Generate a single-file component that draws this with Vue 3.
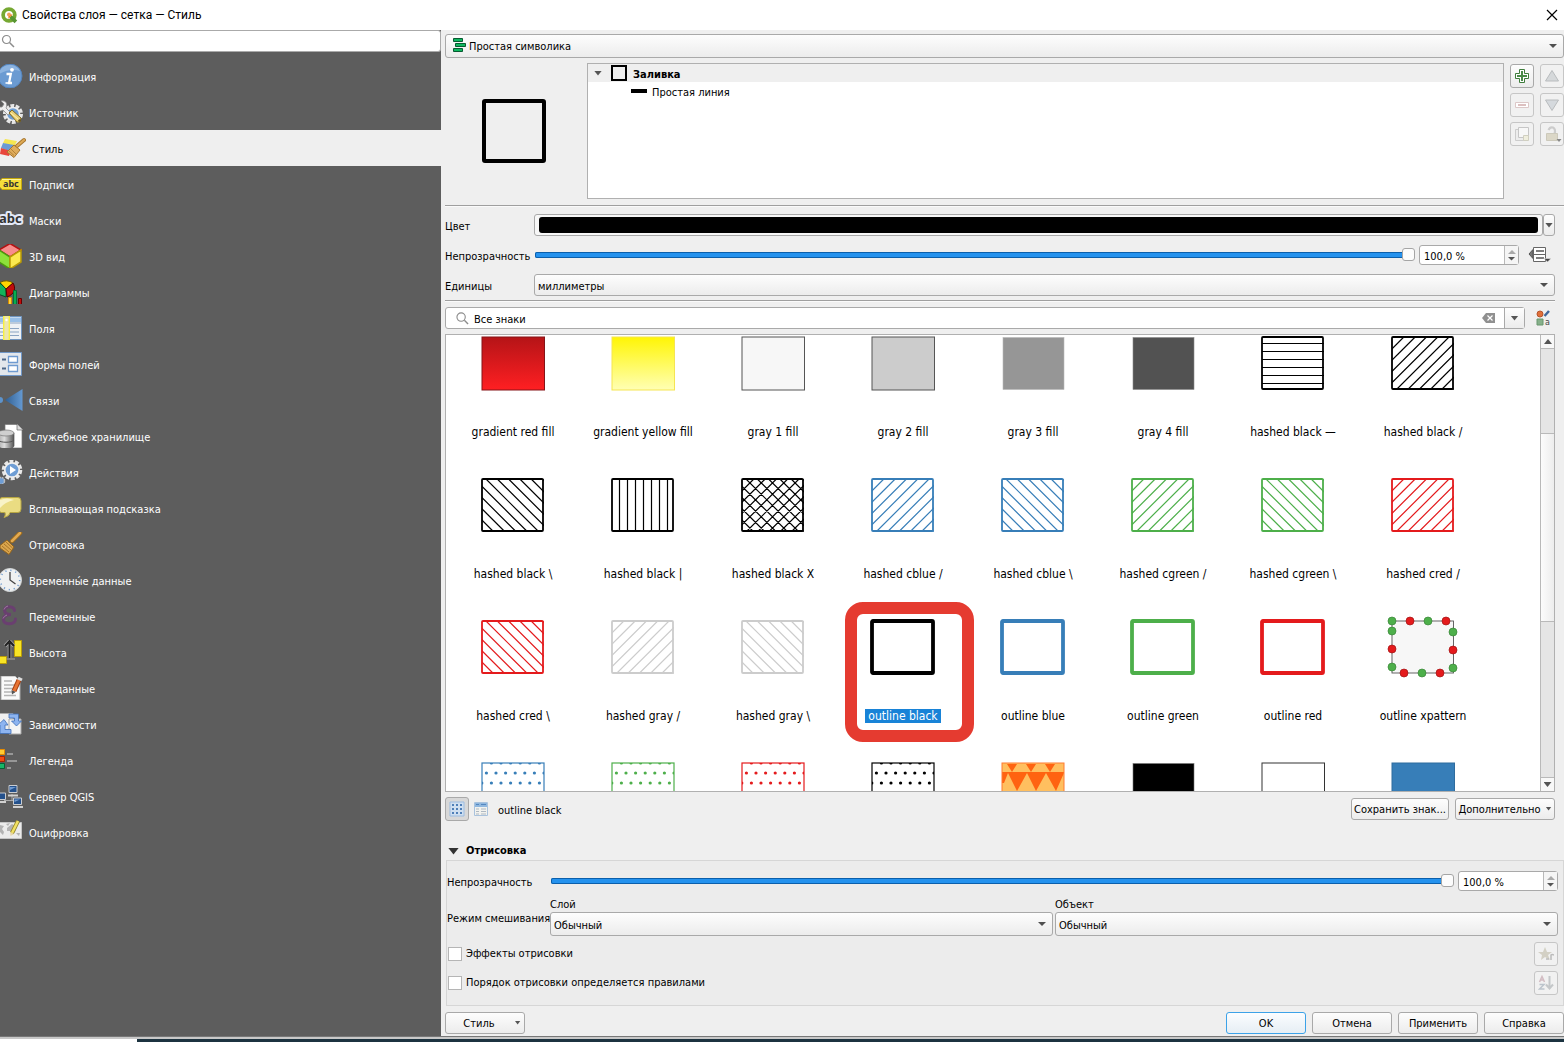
<script setup>
import { ref } from 'vue'

const brush = '<path d="M20 1 12 9" stroke="#9a6a1c" stroke-width="4.500" stroke-linecap="round"/><path d="M20 1 12 9" stroke="#e2a951" stroke-width="2.500" stroke-linecap="round"/><path d="M7 8 14 15 9 22.500 0 16V13.500Z" fill="#dba64e" stroke="#94651d"/><path d="M2 14 9 20M4 12 11 18M6 10 12.500 16" stroke="#a87426" stroke-width="1"/>'

const icons = {
  info: '<circle cx="10" cy="12" r="12" fill="#6b9bd2" stroke="#5585bd"/><path d="M-1 8C3-1 16-1 20 7 14 5 6 6-1 10Z" fill="#8db4e0"/><circle cx="12" cy="5.800" r="1.900" fill="#fff"/><path d="M6.500 10H10.800L9 19H12" fill="none" stroke="#fff" stroke-width="2.300"/><path d="M5.500 19H9" stroke="#fff" stroke-width="1.600"/>',
  source: '<circle cx="13" cy="14" r="8" fill="none" stroke="#e6e6e6" stroke-width="4" stroke-dasharray="3.600 1.400"/><circle cx="13" cy="14" r="6.500" fill="#6f9fd4" stroke="#eee" stroke-width="1.500"/><path d="M1 1C6 0 8 4 6 8L11 13 8 15 3 10C1 11 0 11-1 11L-1 7 2 7 4 4Z" fill="#eeeeee" stroke="#888" stroke-width=".8"/><path d="M9 13 12 10 21 18 20 22 17 22Z" fill="#e9cf73" stroke="#806a25"/><path d="M11 13 19 20" stroke="#fff2b5"/><circle cx="19.500" cy="20.500" r="1.300" fill="#5f5020"/>',
  style: '<path d="M5 3 17 5 14 11 3 7Z" fill="#f5e650"/><path d="M3 7 14 9 11 16 1 12Z" fill="#6a9ad4"/><path d="M1 12 11 15 9 20 0 18Z" fill="#e8463c"/><path d="M24 4 17 10" stroke="#a6752d" stroke-width="4" stroke-linecap="round"/><path d="M24 4 17 10" stroke="#dda955" stroke-width="2.200" stroke-linecap="round"/><path d="M14 9 20 14 14 21.500 7 16Z" fill="#e0ad5c" stroke="#a6752d"/><path d="M9 15 14 19.500M11 13 16 18" stroke="#b5833a"/>',
  label: '<path d="M2 6.500H21.500V17.500H2L-1 14V10Z" fill="#f5de3a" stroke="#c5a80c"/><path d="M2 7.500H21" stroke="#fff59a"/><text x="3" y="15" font-family="Noto Sans,sans-serif" font-size="9" font-weight="bold" fill="#333">abc</text>',
  mask: '<text x="-1" y="15" font-family="Noto Sans,sans-serif" font-size="13" font-weight="bold" fill="#333" stroke="#e4e9f8" stroke-width="4" stroke-linejoin="round" paint-order="stroke">abc</text>',
  cube: '<path d="M10-.5 21 6 10 13-1 6Z" fill="#f88c8c" stroke="#b21212" stroke-width="1.500"/><path d="M-1 6 10 13V25L-1 18Z" fill="#8de23a" stroke="#4b9b10" stroke-width="1.500"/><path d="M21 6 10 13V25L21 18Z" fill="#fce94f" stroke="#b99a06" stroke-width="1.500"/>',
  chart: '<path d="M6 9 0 2.500A10 8 0 0 1 13 3Z" fill="#ffd400" stroke="#6b5900"/><path d="M6 9 0 3-2 14 6 17Z" fill="#12b35a" stroke="#064d25"/><path d="M6 9 13 3C16 8 15 14 7 17Z" fill="#c00c0c" stroke="#500"/><path d="M8.500 17.500h3v7h-3z" fill="#ffd43b" stroke="#d78a00"/><path d="M13.500 10.500h3v14h-3z" fill="#08ad50" stroke="#066d36"/><path d="M18.500 18.500h3v6h-3z" fill="#c00c0c" stroke="#600"/>',
  fields: '<path d="M-1 .5H21.500V23.500H-1Z" fill="#eef1f5" stroke="#6f94bf"/><path d="M0 1.500H21V6H0Z" fill="#98bfe8"/><path d="M0 7H21M0 12.500H19M0 16H19M0 19.500H19" stroke="#8ba4c2"/><path d="M3-1h7v26H3z" fill="#fdf68a"/><path d="M3.700-.5h5.600v25H3.700z" fill="#ece6b0" stroke="#f8ef3f" stroke-width="1.400"/><circle cx="6.500" cy="4" r="1.200" fill="#fff"/>',
  forms: '<path d="M-1 .5H21.500V23.500H-1Z" fill="#e3e7ec" stroke="#7097c7"/><path d="M8.500 4.500h9v6h-9zM8.500 13.500h9v6h-9z" fill="#fff" stroke="#6f9bd0" stroke-width="1.300"/><path d="M2 7.500H6M2 16.500H6" stroke="#4d6787" stroke-width="1.800"/>',
  relation: '<defs><linearGradient id="rel"><stop stop-color="#315f91"/><stop offset="1" stop-color="#6499d2"/></linearGradient></defs><circle cx="0" cy="12" r="3" fill="#5d93cb"/><path d="M5 12 22.500 1V23Z" fill="url(#rel)"/>',
  storage: '<path d="M5 .5H17L22 5.500V24H5Z" fill="#fff" stroke="#777" stroke-width=".7"/><path d="M17 0V6H23" fill="#ddd" stroke="#666" stroke-width=".7"/><defs><linearGradient id="cyl"><stop stop-color="#aaa"/><stop offset=".4" stop-color="#ddd"/><stop offset="1" stop-color="#555"/></linearGradient></defs><path d="M-2 9V22C0 26 13 26 14 22V9Z" fill="url(#cyl)" stroke="#555" stroke-width=".7"/><ellipse cx="6" cy="9" rx="8" ry="3" fill="#cfcfcf" stroke="#777" stroke-width=".7"/><path d="M-2 16C0 19 12 19 14 16" fill="none" stroke="#555"/>',
  action: '<circle cx="12" cy="10" r="8.500" fill="none" stroke="#e8e8e8" stroke-width="3.600" stroke-dasharray="3.800 1.540"/><circle cx="12" cy="10" r="7.200" fill="#6e9dd4" stroke="#eee" stroke-width="1.700"/><path d="M10 6 16 10 10 14Z" fill="#fff"/><circle cx="1" cy="21" r="3.500" fill="#6e9dd4" stroke="#bbb" stroke-width="1.500" stroke-dasharray="2 .8"/>',
  tip: '<path d="M2 1.500H18Q21 1.500 21 5V13Q21 16.500 18 16.500H10Q10 20 4 21.500 6 19 5 16.500H1L-1 15V3Z" fill="#eadc82" stroke="#b7a643"/><path d="M0 4Q7 1 14 4 5 6 0 12Z" fill="#f8f3c7"/>',
  brush,
  clock: '<circle cx="10" cy="12" r="11.500" fill="#eff1f1" stroke="#d0d3d4"/><circle cx="10" cy="12" r="9.700" fill="none" stroke="#6e9bd0" stroke-width="1.500" stroke-dasharray="1.200 3.880"/><path d="M10 4V12L15.500 16" fill="none" stroke="#444" stroke-width="1.300"/>',
  eps: '<path d="M14.500 6.500C14 2 5 1 4.500 6 4.500 9 7 10.500 11 10.500 6 10.500 3 12.500 3.500 16 4 21.500 15 21 15.500 15" fill="none" stroke="#6a3f70" stroke-width="3" stroke-linecap="round"/><path d="M4 5.500Q5 2.500 8 2M3 14.500Q4 12 7 11" fill="none" stroke="#9a7b9c"/>',
  height: '<path d="M14.500.5h7v16h-7z" fill="#f7e425" stroke="#b99c08"/><path d="M-1 16.500H6.500V23.500H-1Z" fill="#f7e425" stroke="#b99c08"/><path d="M6.500 19H15" stroke="#aaa"/><path d="M9.500 18V3M5 6 9.500 1 14 6" fill="none" stroke="#aaa" stroke-width="3.500"/><path d="M9.500 18V3M5 6 9.500 1 14 6" fill="none" stroke="#222" stroke-width="2"/>',
  meta: '<path d="M1 0H15L20 5V24H1Z" fill="#fafafa" stroke="#aaa"/><path d="M4 5H12M4 9H15M4 12.500H15M4 16H15M4 19.500H16" stroke="#b5b5b5" stroke-width="1.300"/><path d="M19 4 14 15" stroke="#a54114" stroke-width="5"/><path d="M19 4 14 15" stroke="#e87332" stroke-width="3"/><path d="M18 2 22 4" stroke="#ddd" stroke-width="3"/><path d="M11.500 14 15.500 16 12 18.500Z" fill="#555"/>',
  deps: '<path d="M-1 1.500H13V18H-1Z" fill="#efefef" stroke="#aaa"/><path d="M9 7H21V22H9Z" fill="#f5f5f5" stroke="#aaa"/><path d="M9 2H18.500V9H21.500L16.500 14 11.500 9H14.500V6H9Z" fill="#8db4f0" stroke="#3f6fb8" stroke-width=".8"/><path d="M11 21.500H0V13H-2L4 7.500 8 13H5V17.500H11Z" fill="#8db4f0" stroke="#3f6fb8" stroke-width=".8"/>',
  legend: '<path d="M-1 1.500H4.500V6.500H-1Z" fill="#fc3" stroke="#e68a00"/><path d="M-1 8.500H4.500V13.500H-1Z" fill="#f04c12" stroke="#a92100"/><path d="M-1 15.500H4.500V20.500H-1Z" fill="#18b567" stroke="#056233"/><path d="M7 6H13M7 13H17M7 20H11" stroke="#aaa" stroke-width="1.500"/>',
  server: '<path d="M12 10V16M4 16.500H18" stroke="#aaa"/><path d="M9 1.500h8v7h-8z" fill="#24518c" stroke="#c9ccd0"/><path d="M8 11.500H18" stroke="#d0d0d0" stroke-width="2"/><path d="M-1 9H5.500V15.500H-1Z" fill="#24518c" stroke="#c9ccd0"/><path d="M-1 18H6" stroke="#d0d0d0" stroke-width="2"/><path d="M13.500 14h8v6.500h-8z" fill="#24518c" stroke="#c9ccd0"/><path d="M13 23H23" stroke="#d0d0d0" stroke-width="2"/><path d="M10 3 16 3 10 6ZM14.500 15.500H20L14.500 18Z" fill="#6f9ad0"/>',
  digit: '<path d="M-1 2.500H21.500V18.500H-1Z" fill="#ebebeb" stroke="#c4c4c4"/><path d="M0 5 4 6 2 9 4 12 3 15 0 12ZM7 8 12 4 17 7 15 12 12 15 10 11 7 11ZM16 13 20 13 19 16ZM6 4 10 3 8 6Z" fill="#b3b3b3"/><path d="M18 1 12 13" stroke="#98882a" stroke-width="4"/><path d="M18 1 12 13" stroke="#f1e164" stroke-width="2.500"/><path d="M10 12 14 14 10.500 16Z" fill="#e9d8a8"/>'
}

const pages = [
  ['info', 'Информация'], ['source', 'Источник'], ['style', 'Стиль'], ['label', 'Подписи'],
  ['mask', 'Маски'], ['cube', '3D вид'], ['chart', 'Диаграммы'], ['fields', 'Поля'],
  ['forms', 'Формы полей'], ['relation', 'Связи'], ['storage', 'Служебное хранилище'],
  ['action', 'Действия'], ['tip', 'Всплывающая подсказка'], ['brush', 'Отрисовка'],
  ['clock', 'Временны́е данные'], ['eps', 'Переменные'], ['height', 'Высота'],
  ['meta', 'Метаданные'], ['deps', 'Зависимости'], ['legend', 'Легенда'],
  ['server', 'Сервер QGIS'], ['digit', 'Оцифровка']
]
const page = ref('style')

const K = '#000', B = '#377eb8', G = '#4daf4a', R = '#e41a1c', L = '#cccccc'
const steps = [-4, -3, -2, -1, 0, 1, 2, 3, 4, 5]
const slash = steps.map(k => `M${4 + k * 11.3} 53l53-53`).join('')
const back = steps.map(k => `M${4 + k * 11.3} 0l53 53`).join('')
const horiz = [6, 14, 22, 30, 38, 46].map(y => `M0 ${y + 0.5}H63`).join('')
const vert = [7, 15, 23, 31, 39, 47, 55].map(x => `M${x + 0.5} 0V53`).join('')

const hatch = (name, color, d) => ({ name, color, d })
const fill = (name, bg, edge) => ({ name, bg, edge })
const solid = (name, bg, edge) => ({ name, bg, edge, borderless: true })
const symbols = [
  fill('gradient red fill', 'url(#gred)', '#851418'),
  fill('gradient yellow fill', 'url(#gyel)', '#f5e552'),
  fill('gray 1 fill', '#f7f7f7', '#555'),
  fill('gray 2 fill', '#cccccc', '#555'),
  solid('gray 3 fill', '#969696', '#b8b8b8'),
  solid('gray 4 fill', '#525252', '#8b8b8b'),
  hatch('hashed black —', K, horiz),
  hatch('hashed black /', K, slash),
  hatch('hashed black \\', K, back),
  hatch('hashed black |', K, vert),
  hatch('hashed black X', K, slash + back),
  hatch('hashed cblue /', B, slash),
  hatch('hashed cblue \\', B, back),
  hatch('hashed cgreen /', G, slash),
  hatch('hashed cgreen \\', G, back),
  hatch('hashed cred /', R, slash),
  hatch('hashed cred \\', R, back),
  hatch('hashed gray /', L, slash),
  hatch('hashed gray \\', L, back),
  { name: 'outline black', outline: K },
  { name: 'outline blue', outline: B },
  { name: 'outline green', outline: G },
  { name: 'outline red', outline: R },
  { name: 'outline xpattern', markers: true }
]
// The row that is only partly scrolled into view shows its artwork alone.
const peeking = [
  { dots: B }, { dots: G }, { dots: R }, { dots: K },
  { triangles: true },
  solid('', '#000', '#777'),
  fill('', '#fff', '#333'),
  fill('', '#377eb8', '#2f6c9e')
]
const tiles = [...symbols, ...peeking]
const selected = ref('outline black')
const greens = [[7, 1], [43, 1], [7, 11], [68, 12], [7, 47], [68, 48], [37, 53]]
const reds = [[25, 1], [61, 1], [7, 29], [68, 30], [19, 53], [55, 53]]
const dotList = []
for (let row = 0; row < 6; row++) {
  const x0 = [10.4, 5.4, 0.8][row % 3]
  for (let k = 0; k < 7; k++) dotList.push([x0 + k * 9.6, row * 10])
}

const opacity = ref(100)
const layerOpacity = ref(100)
const effects = ref(false)
const ordered = ref(false)
</script>

<template>
  <div class="window">
    <header class="titlebar">
      <svg class="logo" viewBox="0 0 16 16" aria-hidden="true">
        <circle cx="7.500" cy="7.500" r="5.500" fill="none" stroke="#76a832" stroke-width="3.500" />
        <path d="M9 9 14 14" stroke="#589632" stroke-width="3.500" />
        <path d="M7 7H11L7 11Z" fill="#ee7913" />
        <circle cx="7.500" cy="7" r="1.800" fill="#f0a05a" />
      </svg>
      <h1>Свойства слоя — сетка — Стиль</h1>
      <button class="close" aria-label="Закрыть">
        <svg viewBox="0 0 12 12"><path d="M1 1 11 11M11 1 1 11" stroke="#000" stroke-width="1.200" /></svg>
      </button>
    </header>

    <div class="body">
      <aside class="side">
        <label class="side-search">
          <svg viewBox="0 0 14 14"><circle cx="5.500" cy="5.500" r="4" fill="none" stroke="#8c8c8c" stroke-width="1.200" /><path d="M8.500 8.500 13 13" stroke="#8c8c8c" stroke-width="1.500" /></svg>
          <input type="text" aria-label="Поиск">
        </label>
        <nav>
          <button v-for="[id, name] in pages" :key="id" class="page" :class="{ on: page === id }" @click="page = id">
            <svg viewBox="0 0 26 24" fill="none" aria-hidden="true" v-html="icons[id]" />
            <span>{{ name }}</span>
          </button>
        </nav>
      </aside>

      <main class="main">
        <div class="combo renderer">
          <svg class="combo-icon" viewBox="0 0 14 15" aria-hidden="true">
            <path d="M1.500.5h9v3h-9zM3.500 5.500h10v3h-10zM1.500 10.500h9v3h-9z" fill="#0fb75f" stroke="#075a31" />
          </svg>
          <select aria-label="Символика"><option>Простая символика</option></select>
        </div>

        <section class="symbol">
          <div class="preview">
            <svg viewBox="0 0 66 66"><rect x="3" y="3" width="60" height="60" rx="1" fill="none" stroke="#000" stroke-width="4" /></svg>
          </div>
          <div class="tree" role="tree">
            <div class="node root" role="treeitem">
              <i class="tri" />
              <svg class="sq" viewBox="0 0 16 16"><rect x="1" y="1" width="14" height="14" fill="none" stroke="#000" stroke-width="2" /></svg>
              <b>Заливка</b>
            </div>
            <div class="node leaf" role="treeitem">
              <svg class="dash" viewBox="0 0 16 4"><path d="M0 2H16" stroke="#000" stroke-width="4" /></svg>
              <span>Простая линия</span>
            </div>
          </div>
          <div class="tools">
            <button class="tool" aria-label="Добавить"><svg viewBox="0 0 16 16"><path d="M5.500 1.500h5v4h4v5h-4v4h-5v-4h-4v-5h4Z" fill="#fff" stroke="#3f7d3c" /><path d="M8 3v10M3 8h10" stroke="#4a8a47" stroke-width="2" /></svg></button>
            <button class="tool off" disabled aria-label="Вверх"><svg viewBox="0 0 16 16"><path d="M8 2.500 14.500 13H1.500Z" fill="#d5d8da" stroke="#b9bcbe" /></svg></button>
            <button class="tool off" disabled aria-label="Удалить"><svg viewBox="0 0 16 16"><path d="M1.500 5.500h13v5h-13z" fill="#fff" stroke="#dcc8c8" /><path d="M4 8h8" stroke="#dcc0c0" stroke-width="2" /></svg></button>
            <button class="tool off" disabled aria-label="Вниз"><svg viewBox="0 0 16 16"><path d="M8 13.500 14.500 3H1.500Z" fill="#d5d9dd" stroke="#b9bcbe" /></svg></button>
            <button class="tool off" disabled aria-label="Копировать"><svg viewBox="0 0 16 16"><path d="M1.500 3.500h9v11h-9z" fill="#ededed" stroke="#ccc" /><path d="M4.500 1.500h10v10h-10z" fill="#f7f7f7" stroke="#c6c6c6" /><path d="M9.500 9.500h5v5h-5z" fill="#efeedd" stroke="#d0cfc0" /></svg></button>
            <button class="tool off" disabled aria-label="Заблокировать"><svg class="lock" viewBox="0 0 16 16"><path d="M4.500 4Q6 .5 9 1.500 12 3 10.500 8" fill="none" stroke="#ccc" stroke-width="2.200" /><path d="M2.500 7.500h11v7h-11z" fill="#dbd7c7" stroke="#ccc9bb" /><path d="M12.500 13h5l-2.500 3z" fill="#888" /></svg></button>
          </div>
        </section>

        <hr>

        <section class="form">
          <label for="color">Цвет</label>
          <div class="color">
            <button id="color" class="swatch"><i /></button>
            <button class="drop" aria-label="Меню цвета"><i class="tri" /></button>
          </div>
          <label for="opacity">Непрозрачность</label>
          <div class="slide">
            <input id="opacity" v-model="opacity" type="range" min="0" max="100">
            <div class="spin">
              <input type="text" :value="opacity + ',0 %'" aria-label="Непрозрачность, %">
              <span class="steps"><i class="tri up" /><i class="tri" /></span>
            </div>
            <button class="bare" aria-label="Переопределение данными">
              <svg viewBox="0 0 24 18"><path d="M1 8 5 3.500V12.500Z" fill="#777" stroke="#555" /><path d="M5.500 1.500h12v14h-12z" fill="#fff" stroke="#666" /><path d="M8 5h8M8 12h8" stroke="#555" stroke-width="1.500" /><path d="M5 8.500h13" stroke="#666" /><path d="M16 12.500h7L19.500 16Z" fill="#444" stroke="#efefef" stroke-width=".5" /></svg>
            </button>
          </div>
          <label for="units">Единицы</label>
          <div class="combo"><select id="units"><option>миллиметры</option></select></div>
        </section>

        <hr class="short">

        <section class="filter">
          <div class="find">
            <svg class="glass" viewBox="0 0 14 14"><circle cx="5.500" cy="5.500" r="4.500" fill="none" stroke="#8c8c8c" stroke-width="1.200" /><path d="M9 9 13 13" stroke="#8c8c8c" stroke-width="1.500" /></svg>
            <input type="text" value="Все знаки" aria-label="Поиск знаков">
            <svg class="erase" viewBox="0 0 14 10"><path d="M0 5 4 0H13V10H4Z" fill="#909090" /><path d="M5.500 2.500 10.500 7.500M10.500 2.500 5.500 7.500" stroke="#fff" stroke-width="1.200" /></svg>
            <button class="drop" aria-label="Группы"><i class="tri" /></button>
          </div>
          <button class="bare" aria-label="Управление стилями">
            <svg viewBox="0 0 16 16"><circle cx="5" cy="4" r="3" fill="#e0703a" stroke="#b5532b" /><path d="M14 1 9.500 6" stroke="#41689b" stroke-width="2.500" /><path d="M2 9h6v6H2z" fill="#86b08a" stroke="#68966e" /><text x="10" y="15" font-family="DejaVu Sans,sans-serif" font-size="8" fill="#444">a</text></svg>
          </button>
        </section>

        <section class="gallery">
          <div class="tiles">
            <svg class="defs" width="0" height="0" aria-hidden="true">
              <defs>
                <linearGradient id="gred" x2="0" y2="1"><stop stop-color="#b51417" /><stop offset="1" stop-color="#ff1f22" /></linearGradient>
                <linearGradient id="gyel" x2="0" y2="1"><stop stop-color="#fff504" /><stop offset="1" stop-color="#ffffb4" /></linearGradient>
              </defs>
            </svg>
            <button v-for="(s, n) in tiles" :key="n" class="tile" :class="{ on: selected === s.name }" @click="selected = s.name || selected">
              <svg class="art" viewBox="0 0 76 58" aria-hidden="true">
                <rect v-if="s.borderless" x="8" y="2.500" width="61" height="52" :fill="s.bg" :stroke="s.edge" stroke-width=".6" />
                <rect v-else-if="s.bg" x="7" y="2" width="62.500" height="53" :fill="s.bg" :stroke="s.edge" />
                <template v-else-if="s.d">
                  <svg x="7" y="2" width="62" height="53"><path :d="s.d" fill="none" :stroke="s.color" stroke-width="1.200" /></svg>
                  <rect x="7" y="2" width="61" height="52" rx="1" fill="none" :stroke="s.color" stroke-width="1.800" />
                </template>
                <rect v-else-if="s.outline" x="7" y="2" width="61" height="52" rx="1" fill="none" :stroke="s.outline" stroke-width="3.800" />
                <template v-else-if="s.markers">
                  <rect x="7" y="2" width="61.500" height="52" fill="#f7f7f7" stroke="#555" stroke-width=".9" />
                  <circle v-for="([x, y], i) in greens" :key="'g' + i" :cx="x" :cy="y + 1" r="4" fill="#4daf4a" stroke="#3b8539" stroke-width=".7" />
                  <circle v-for="([x, y], i) in reds" :key="'r' + i" :cx="x" :cy="y + 1" r="4" fill="#e41a1c" stroke="#a01416" stroke-width=".7" />
                </template>
                <template v-else-if="s.dots">
                  <svg x="7" y="2" width="62" height="54"><circle v-for="([x, y], i) in dotList" :key="i" :cx="x - 1" :cy="y" r="1.600" :fill="s.dots" /></svg>
                  <rect x="7" y="2" width="62" height="54" fill="none" :stroke="s.dots" stroke-width="1.200" />
                </template>
                <template v-else>
                  <rect x="7" y="2" width="62" height="54" fill="#ffbf5f" />
                  <path d="M12 3h10l-5 8zM31 3h10l-5 8zM50 3h10l-5 8zM13 12h19l-10 18zM32 12h19l-10 18zM51 12h18l-8 18zM7 12h6l-4 10H7zM7 11h62v1H7z" fill="#ff6311" />
                  <rect x="7" y="2" width="62" height="54" fill="none" stroke="#ff7b30" />
                </template>
              </svg>
              <span v-if="s.name">{{ s.name }}</span>
              <i v-if="s.name === 'outline black'" class="mark" />
            </button>
          </div>
          <div class="scroll" aria-hidden="true">
            <span class="arrow"><i class="tri dark" /></span>
            <span class="before" /><span class="thumb" /><span class="after" />
            <span class="arrow last"><i class="tri" /></span>
          </div>
        </section>

        <section class="actions">
          <button class="tool pressed" aria-label="Значки"><svg viewBox="0 0 16 16"><path d="M1 1h14v14H1z" fill="#cfdff0" stroke="#9dbce0" /><path d="M3 3h2v2H3zM7 3h2v2H7zM11 3h2v2h-2zM3 7h2v2H3zM7 7h2v2H7zM11 7h2v2h-2zM3 11h2v2H3zM7 11h2v2H7zM11 11h2v2h-2z" fill="#4f7fb8" /></svg></button>
          <button class="bare list" aria-label="Список"><svg viewBox="0 0 16 16"><path d="M1.500 1.500h13v13h-13z" fill="#f2f2ee" stroke="#a9c2dd" /><path d="M2 2h12v4H2z" fill="#8fb7df" /><path d="M3 8h3M8 8h5M3 10.500h3M8 10.500h5M3 13h3M8 13h5" stroke="#aeb8c2" /><path d="M3 3.500h3M8 3.500h5" stroke="#5487bf" /></svg></button>
          <span class="current">{{ selected }}</span>
          <button class="btn save">Сохранить знак...</button>
          <button class="btn more">Дополнительно <i class="tri" /></button>
        </section>

        <h2><i class="tri" />Отрисовка</h2>

        <section class="group">
          <div class="row">
            <label for="layer-opacity">Непрозрачность</label>
            <div class="slide">
              <input id="layer-opacity" v-model="layerOpacity" type="range" min="0" max="100">
              <div class="spin">
                <input type="text" :value="layerOpacity + ',0 %'" aria-label="Непрозрачность слоя, %">
                <span class="steps"><i class="tri up" /><i class="tri" /></span>
              </div>
            </div>
          </div>
          <div class="row blend">
            <span>Режим смешивания</span>
            <div class="modes">
              <label>Слой<span class="combo"><select><option>Обычный</option></select></span></label>
              <label>Объект<span class="combo"><select><option>Обычный</option></select></span></label>
            </div>
          </div>
          <div class="check">
            <label><input v-model="effects" type="checkbox">Эффекты отрисовки</label>
            <button class="tool off" disabled aria-label="Настроить эффекты"><svg viewBox="0 0 16 16"><path d="M7 1 9 6 14 6 10 9 12 14 7 11 3 14 4 9 0 6 5 6Z" fill="#d3d0c4" /><path d="M13 14V9Q14 8 16 9M8 13h3" stroke="#bbb" fill="none" stroke-width="1.500" /></svg></button>
          </div>
          <div class="check">
            <label><input v-model="ordered" type="checkbox">Порядок отрисовки определяется правилами</label>
            <button class="tool off" disabled aria-label="Порядок"><svg viewBox="0 0 16 16"><path d="M1.500 7 4 1.500 6.500 7M2 5h4" fill="none" stroke="#d2bcc2" stroke-width="1.500" /><path d="M1.500 9.500H6L1.500 14H6.500" fill="none" stroke="#bcc4cc" stroke-width="1.500" /><path d="M11.500 1v11M8 9.500l3.500 4 3.500-4" fill="none" stroke="#c4c7c9" stroke-width="2" /></svg></button>
          </div>
        </section>

        <footer class="footer">
          <button class="btn style-btn">Стиль <i class="tri" /></button>
          <button class="btn primary">OK</button>
          <button class="btn">Отмена</button>
          <button class="btn">Применить</button>
          <button class="btn">Справка</button>
        </footer>
      </main>
    </div>
    <div class="taskbar"><span /></div>
  </div>
</template>

<style>
body { margin: 0; background: #efefef; }
</style>

<style scoped>
.window {
  display: flex;
  flex-direction: column;
  height: 100vh;
  min-height: 900px;
  overflow: hidden;
  background: #efefef;
  color: #000;
  font: 11px/14px "DejaVu Sans Condensed", "Noto Sans", sans-serif;
}
.window * { box-sizing: border-box; }
svg { display: block; flex: none; }
button, input, select { font: inherit; color: inherit; margin: 0; padding: 0; outline: 0; }
button { background: none; border: 0; }

.tri {
  display: block;
  flex: none;
  width: 8px;
  height: 5px;
  background: #555;
  clip-path: polygon(0 0, 100% 0, 50% 100%);
}
.tri.up { transform: rotate(180deg); background: #aaa; }
.tri.dark { transform: rotate(180deg); }

.titlebar { display: flex; align-items: center; flex: none; height: 30px; padding: 0 6px 0 1px; background: #fff; }
.logo { width: 17px; height: 17px; }
.titlebar h1 { flex: 1; margin: 0 0 0 4px; font: 12px/16px Roboto, "Noto Sans", sans-serif; }
.close svg { width: 12px; height: 12px; }

.body { display: flex; flex: 1; min-height: 0; border-bottom: 1px solid #777; }
.side { flex: none; width: 441px; background: #5d5d5d; }
.side-search { display: flex; align-items: center; height: 22px; background: #fff; border: 1px solid #aaa; border-left: 0; border-radius: 0 3px 3px 0; }
.side-search svg { width: 14px; height: 14px; margin-left: 1px; }
.side-search input { flex: 1; border: 0; background: none; }
.side nav { padding-top: 6px; }
.page { display: flex; align-items: center; width: 100%; height: 36px; color: #fff; text-align: left; }
.page svg { width: 26px; height: 24px; margin-right: 3px; }
.page span { padding-top: 3px; }
.page.on { color: #000; background: #efefef; }
.page.on svg { margin-right: 6px; }

.main { display: flex; flex-direction: column; flex: 1; min-width: 0; padding: 4px 0 2px 4px; }

.combo { position: relative; display: block; }
.combo::after {
  content: "";
  position: absolute;
  right: 7px;
  top: 50%;
  width: 8px;
  height: 4px;
  margin-top: -2px;
  background: #505050;
  clip-path: polygon(0 0, 100% 0, 50% 100%);
  pointer-events: none;
}
.combo select {
  appearance: none;
  display: block;
  width: 100%;
  height: 22px;
  padding: 3px 20px 0 3px;
  border: 1px solid #a9a9a9;
  border-radius: 3px;
  background: linear-gradient(#fdfdfd, #ececec);
}
.renderer select { height: 24px; padding: 1px 20px 0 23px; }
.combo-icon { position: absolute; left: 7px; top: 4px; width: 14px; height: 15px; }

.symbol { display: flex; height: 136px; margin: 5px 0 6px; }
.preview { display: flex; align-items: center; justify-content: center; width: 142px; flex: none; }
.preview svg { width: 66px; height: 66px; margin-left: -4px; }
.tree { flex: 1; border: 1px solid #b0b0b0; background: #fff; }
.node { display: flex; align-items: center; height: 18px; }
.node b, .node span { padding-top: 3px; }
.root { padding-left: 6px; background: #efefef; }
.sq { width: 16px; height: 16px; margin: 0 6px 0 9px; }
.leaf { padding-left: 43px; }
.dash { width: 16px; height: 4px; margin-right: 5px; }
.tools { display: grid; grid-template-columns: 24px 24px; grid-auto-rows: 24px; gap: 5px 6px; padding: 1px 0 0 6px; flex: none; }
.tool {
  display: flex;
  align-items: center;
  justify-content: center;
  flex: none;
  width: 24px;
  height: 24px;
  border: 1px solid #a9a9a9;
  border-radius: 3px;
  background: linear-gradient(#fdfdfd, #ececec);
}
.tool svg { width: 16px; height: 16px; }
.lock { overflow: visible; }
.tool.off { border-color: #c6c6c6; background: #f1f1f1; }
.tool.pressed { background: #d8d8d8; }

hr { flex: none; width: 100%; height: 2px; margin: 0; border: 0; background: #fafafa; border-top: 1px solid #9f9f9f; }
hr.short { width: auto; margin-right: 9px; }

.form { display: grid; grid-template-columns: 89px 1fr; grid-auto-rows: 22px; row-gap: 8px; align-items: center; padding: 7px 9px 4px 0; }
.form > label { padding-top: 3px; }
.color { display: flex; height: 22px; }
.swatch { flex: 1; padding: 2px 4px; border: 1px solid #a9a9a9; border-radius: 3px; background: #f7f7f7; }
.swatch i { display: block; height: 16px; border-radius: 3px; background: #000; }
.drop { display: flex; align-items: center; justify-content: center; width: 12px; border: 1px solid #a9a9a9; border-radius: 3px; background: linear-gradient(#fdfdfd, #ececec); }

.slide { display: flex; align-items: center; height: 20px; }
.slide input[type="range"] { appearance: none; flex: 1; min-width: 0; height: 14px; margin-left: 1px; background: none; }
.slide input[type="range"]::-webkit-slider-runnable-track { height: 6px; border-radius: 2px; background: #2492ee; box-shadow: inset 0 0 0 1px #0b5fab; }
.slide input[type="range"]::-webkit-slider-thumb { appearance: none; box-sizing: border-box; width: 13px; height: 13px; margin-top: -4px; border: 1px solid #a5a5a5; border-radius: 3px; background: #fcfcfc; }
.spin { display: flex; flex: none; width: 100px; height: 20px; margin-left: 4px; border: 1px solid #a9a9a9; border-radius: 3px; background: #fff; }
.spin input { flex: 1; min-width: 0; padding: 3px 0 0 4px; border: 0; background: none; }
.steps { display: flex; flex-direction: column; align-items: center; justify-content: center; gap: 3px; width: 14px; border-left: 1px solid #b9b9b9; background: #f5f5f5; }
.steps .tri { height: 4px; }
.slide .bare { margin: 0 3px 0 9px; }
.slide .bare svg { width: 24px; height: 18px; }

.filter { display: flex; align-items: center; margin: 5px 0 5px; padding-right: 13px; }
.find { display: flex; flex: 1; align-items: center; height: 22px; border: 1px solid #a9a9a9; border-radius: 3px; background: #fff; }
.glass { width: 13px; height: 13px; margin-left: 10px; }
.find input { flex: 1; padding: 3px 0 0 5px; border: 0; background: none; }
.erase { width: 14px; height: 10px; margin-right: 8px; }
.find .drop { width: 20px; height: 20px; border-width: 0 0 0 1px; border-radius: 0; }
.filter .bare { margin-left: 10px; }
.filter .bare svg { width: 16px; height: 16px; }

.gallery { display: flex; flex: 1; min-height: 0; margin-right: 9px; border: 1px solid #b0b0b0; background: #fff; }
.tiles { flex: 1; display: grid; grid-template-columns: repeat(auto-fill, 130px); grid-auto-rows: 142px; padding-left: 2px; overflow: hidden; }
.defs { position: absolute; }
.tile { position: relative; display: flex; flex-direction: column; align-items: center; font-size: 12px; line-height: 14px; }
.art { width: 76px; height: 58px; margin-bottom: 32px; overflow: visible; }
.tile span { padding: 0 3px; }
.tile.on span { color: #fff; background: #1883d7; }
.mark { position: absolute; left: 7px; top: -17px; width: 129px; height: 140px; border: 12px solid #e53b30; border-radius: 18px; }
.scroll { display: flex; flex-direction: column; flex: none; width: 14px; border-left: 1px solid #b9b9b9; background: #e5e5e5; }
.arrow { display: flex; align-items: center; justify-content: center; height: 14px; border-bottom: 1px solid #b9b9b9; background: #f8f8f8; }
.arrow.last { border-width: 1px 0 0; border-top: 1px solid #b9b9b9; }
.before { flex: 85; }
.thumb { flex: 188; border: solid #b9b9b9; border-width: 1px 0; background: linear-gradient(90deg, #fcfcfc, #ededed); }
.after { flex: 156; }

.actions { display: flex; align-items: center; height: 24px; margin: 5px 9px 0 0; }
.list { margin: 0 9px 0 4px; }
.list svg { width: 16px; height: 16px; }
.current { flex: 1; padding-top: 3px; }
.btn {
  display: flex;
  align-items: center;
  justify-content: center;
  flex: none;
  width: 80px;
  height: 22px;
  padding-top: 2px;
  border: 1px solid #a9a9a9;
  border-radius: 3px;
  background: linear-gradient(#fdfdfd, #ececec);
  white-space: nowrap;
}
.btn .tri { width: 6px; height: 4px; margin: -3px 0 0 5px; }
.save { width: 98px; margin-right: 6px; }
.more { width: 100px; }

h2 { display: flex; align-items: center; flex: none; height: 18px; margin: 21px 0 0 3px; font-size: 11px; }
h2 .tri { width: 11px; height: 7px; margin-right: 7px; background: #333; }

.group { flex: none; margin-left: 1px; padding: 10px 5px 10px 0; border: 1px solid #d6d6d6; background: #ececec; }
.row { display: flex; align-items: center; }
.row > label, .row > span { width: 103px; flex: none; padding-top: 3px; white-space: nowrap; }
.row .slide { flex: 1; }
.blend { margin: 7px 0 6px; }
.modes { display: flex; flex: 1; gap: 2px; }
.modes label { flex: 1; }
.modes select { height: 24px; }
.check { display: flex; align-items: center; justify-content: space-between; height: 24px; }
.check + .check { margin-top: 5px; }
.check label { display: flex; align-items: center; padding-left: 1px; }
.check input { appearance: none; width: 14px; height: 14px; margin-right: 4px; border: 1px solid #b5b5b5; background: #fff; }

.footer { display: flex; flex: none; gap: 6px; margin-top: 6px; }
.style-btn { margin-right: auto; }
.style-btn .tri { margin: -3px -14px 0 20px; }
.primary { border-color: #3ca2e8; background: linear-gradient(#fbfdff, #e6eef4); }

.taskbar { flex: none; height: 5px; border-top: 2px solid #c8c8c8; background: #1c3340; }
.taskbar span { display: block; width: 137px; height: 3px; background: #fff; }
</style>
